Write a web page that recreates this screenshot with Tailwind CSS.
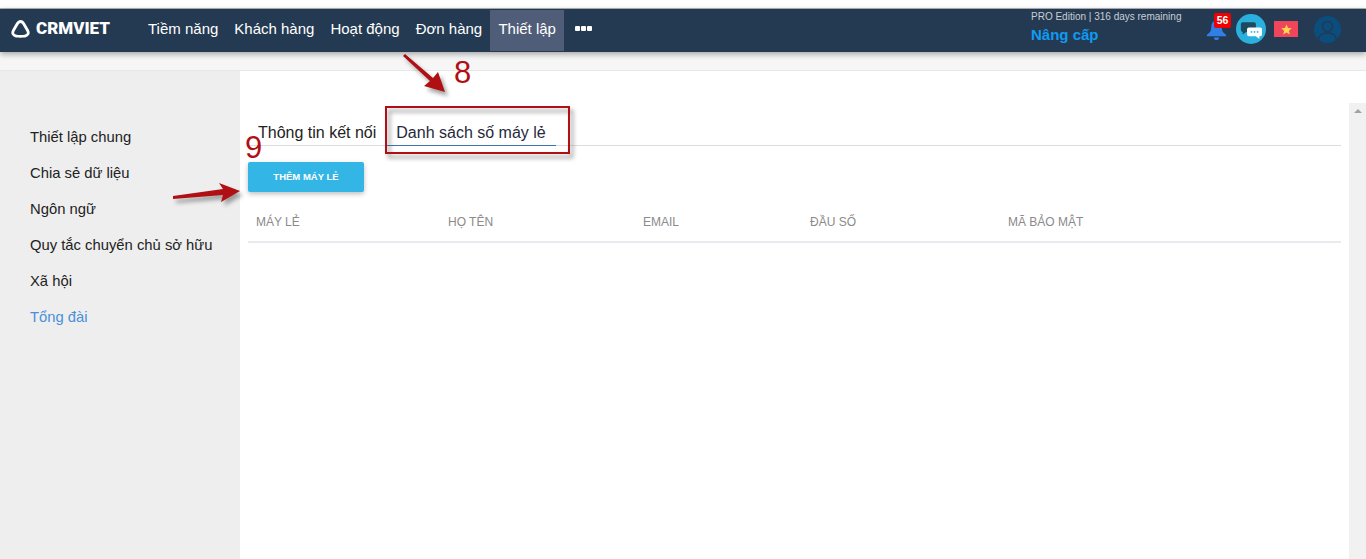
<!DOCTYPE html>
<html lang="en">
<head>
<meta charset="UTF-8">
<title>CRMVIET</title>
<script src="https://cdn.jsdelivr.net/npm/@tailwindcss/browser@4"></script>
</head>
<body class="bg-white h-[559px] overflow-hidden font-['Liberation_Sans',Arial,sans-serif] relative">
  <div class="h-[9px] bg-white border-b border-[#b5b5b5]"></div>

  <!-- Top nav -->
  <header class="h-[43px] bg-[#243a52] flex items-stretch text-white shadow-[0_2px_6px_rgba(0,0,0,0.35)] relative z-10">
    <div class="w-[140px] flex items-center pl-[11px] gap-[6px] pb-[4px]">
      <svg width="19" height="18" viewBox="0 0 19 18" fill="none" stroke="white" stroke-width="2.8" stroke-linejoin="round"><path d="M9.500 1.500 C8 1.500 7 2.500 6 4.300 L2.400 10.500 C1 13 2 15.500 5 16 C8 16.600 11 16.600 14 16 C17 15.500 18 13 16.600 10.500 L13 4.300 C12 2.500 11 1.500 9.500 1.500 Z"/></svg>
      <span class="text-[17px] font-black font-['Roboto',sans-serif] leading-none">CRMVIET</span>
    </div>
    <nav class="flex items-stretch text-[15px] mt-px mb-px">
      <a class="px-2 flex items-center pb-[3px]">Tiềm năng</a>
      <a class="px-2 flex items-center pb-[3px]">Khách hàng</a>
      <a class="px-2 flex items-center pb-[3px]">Hoạt động</a>
      <a class="px-2 flex items-center pb-[3px]">Đơn hàng</a>
      <a class="px-[8px] flex items-center pb-[3px] bg-[#505d78] w-[74px] justify-center">Thiết lập</a>
      <a class="pl-[11px] flex items-center gap-px pb-[4px]">
        <span class="w-[5px] h-[5px] bg-white rounded-[1px]"></span>
        <span class="w-[5px] h-[5px] bg-white rounded-[1px]"></span>
        <span class="w-[5px] h-[5px] bg-white rounded-[1px]"></span>
      </a>
    </nav>
    <div class="ml-auto flex items-center pb-[3px]">
      <div class="w-[175px] -mt-[3px]">
        <div class="text-[10px] leading-[12px] text-[#c9ced4] whitespace-nowrap">PRO Edition | 316 days remaining</div>
        <div class="text-[15px] leading-[20px] mt-[2px] font-bold text-[#0f9bf2]">Nâng cấp</div>
      </div>
      <div class="relative w-[30px] h-[30px]">
        <svg class="absolute left-0 top-[5px]" width="21" height="22" viewBox="0 0 24 24" fill="#2f7fe6"><path d="M12 1 C7.500 1 6 5 6 9 C6 13 4.500 15 1 17.500 L1 19 L23 19 L23 17.500 C19.500 15 18 13 18 9 C18 5 16.500 1 12 1 Z"/><path d="M9 20.500 L15 20.500 C15 22.500 13.500 23.500 12 23.500 C10.500 23.500 9 22.500 9 20.500 Z"/></svg>
        <span class="absolute left-[8px] -top-[1px] w-[17px] h-[15px] bg-[#f00000] rounded-[2px] text-[10.5px] leading-[15px] font-bold text-center">56</span>
      </div>
      <div class="w-[30px] h-[30px] rounded-full bg-[#2bb0de] relative">
        <svg class="absolute left-[4px] top-[8px]" width="22" height="18" viewBox="0 0 25 20"><path d="M3 0 H16 Q18 0 18 2 V9 Q18 11 16 11 H7 L3 14 V11 Q1 11 1 9 V2 Q1 0 3 0 Z" fill="#1c4a5e"/><path d="M10 6 H23 Q25 6 25 8 V14 Q25 16 23 16 H22 V19 L18 16 H10 Q8 16 8 14 V8 Q8 6 10 6 Z" fill="white"/><circle cx="13" cy="11" r="1" fill="#2bb0de"/><circle cx="16.500" cy="11" r="1" fill="#2bb0de"/><circle cx="20" cy="11" r="1" fill="#2bb0de"/></svg>
      </div>
      <div class="w-[24px] h-[16px] bg-[#f0455a] ml-[8px] flex items-center justify-center">
        <svg width="11" height="11" viewBox="0 0 24 24" fill="#ffd84d"><path d="M12 1 L15.300 8.500 L23.500 9.300 L17.300 14.700 L19.100 22.700 L12 18.500 L4.900 22.700 L6.700 14.700 L0.500 9.300 L8.700 8.500 Z"/></svg>
      </div>
      <div class="w-[27px] h-[27px] rounded-full bg-[#0b4d7d] ml-[16px] mr-[25px] overflow-hidden">
        <svg width="27" height="27" viewBox="0 0 27 27" fill="none" stroke="#243a52" stroke-width="1.600"><circle cx="13.500" cy="10.500" r="5"/><path d="M4.500 24 C5 18.500 9 17 13.500 17 C18 17 22 18.500 22.500 24"/></svg>
      </div>
    </div>
  </header>

  <div class="h-[19px] bg-[#f6f6f6] border-b border-[#e8e8e8]"></div>

  <div class="flex h-[488px]">
    <!-- Sidebar -->
    <aside class="w-[240px] bg-[#eeeeee] pt-[48px] pl-[30px] text-[14.8px] text-[#222]">
      <ul class="flex flex-col">
        <li class="h-[36px] leading-[36px]">Thiết lập chung</li>
        <li class="h-[36px] leading-[36px]">Chia sẻ dữ liệu</li>
        <li class="h-[36px] leading-[36px]">Ngôn ngữ</li>
        <li class="h-[36px] leading-[36px]">Quy tắc chuyển chủ sở hữu</li>
        <li class="h-[36px] leading-[36px]">Xã hội</li>
        <li class="h-[36px] leading-[36px] text-[#4a90d9]">Tổng đài</li>
      </ul>
    </aside>

    <!-- Main -->
    <main class="flex-1 pl-[8px] pr-[25px] pt-[46px]">
      <div class="flex border-b border-[#dcdcdc] h-[29px] text-[16px] text-[#222]">
        <div class="pl-[10px] pr-[10px] leading-[32px]">Thông tin kết nối</div>
        <div class="px-[10px] leading-[32px] border-b border-[#3a72b8] h-[29px] text-[#1f2a3c]">Danh sách số máy lẻ</div>
      </div>
      <button class="mt-[16px] w-[116px] h-[30px] bg-[#33b5e5] rounded-[2px] text-white text-[9.5px] font-bold shadow-[0_2px_5px_rgba(0,0,0,0.26)] block">THÊM MÁY LẺ</button>
      <div class="mt-[11px] h-[40px] border-b-2 border-[#e8eaed] flex items-center text-[12px] text-[#8a8a8a]">
        <div class="w-[200px] pl-[8px]">MÁY LẺ</div>
        <div class="w-[195px]">HỌ TÊN</div>
        <div class="w-[167px]">EMAIL</div>
        <div class="w-[198px]">ĐẦU SỐ</div>
        <div>MÃ BẢO MẬT</div>
      </div>
    </main>
  </div>

  <!-- Scrollbar -->
  <div class="absolute left-[1349px] top-[103px] bottom-0 w-[17px] bg-[#f1f1f1] flex justify-center pt-[6px]">
    <div class="w-0 h-0 border-x-[4px] border-x-transparent border-b-[4px] border-b-[#a3a3a3]"></div>
  </div>

  <!-- Annotations drawn over the screenshot -->
  <svg class="absolute left-0 top-0 pointer-events-none" width="1366" height="559" viewBox="0 0 1366 559" fill="none">
    <g class="blur-[2px]" opacity="0.55" transform="translate(3 4)">
      <rect x="386" y="107" width="183" height="46" stroke="#555" stroke-width="2.500"/>
      <path d="M403 56 L430 81 L424 86 L445 92 L438 72 L433 78 L405 54 Z" fill="#555"/>
      <path d="M173 196 L223 189 L219 183 L240 191 L221 202 L223 195 L173 199 Z" fill="#555"/>
    </g>
    <rect x="386" y="107" width="183" height="46" stroke="#b00f14" stroke-width="2"/>
    <path d="M403 56 L430 81 L424 86 L445 92 L438 72 L433 78 L405 54 Z" fill="#b00f14"/>
    <path d="M173 196 L223 189 L219 183 L240 191 L221 202 L223 195 L173 199 Z" fill="#b00f14"/>
  </svg>
  <span class="absolute left-[454px] top-[55px] text-[31px] leading-[36px] text-[#b00f14]">8</span>
  <span class="absolute left-[245px] top-[130px] text-[31px] leading-[36px] text-[#b00f14]">9</span>
</body>
</html>
